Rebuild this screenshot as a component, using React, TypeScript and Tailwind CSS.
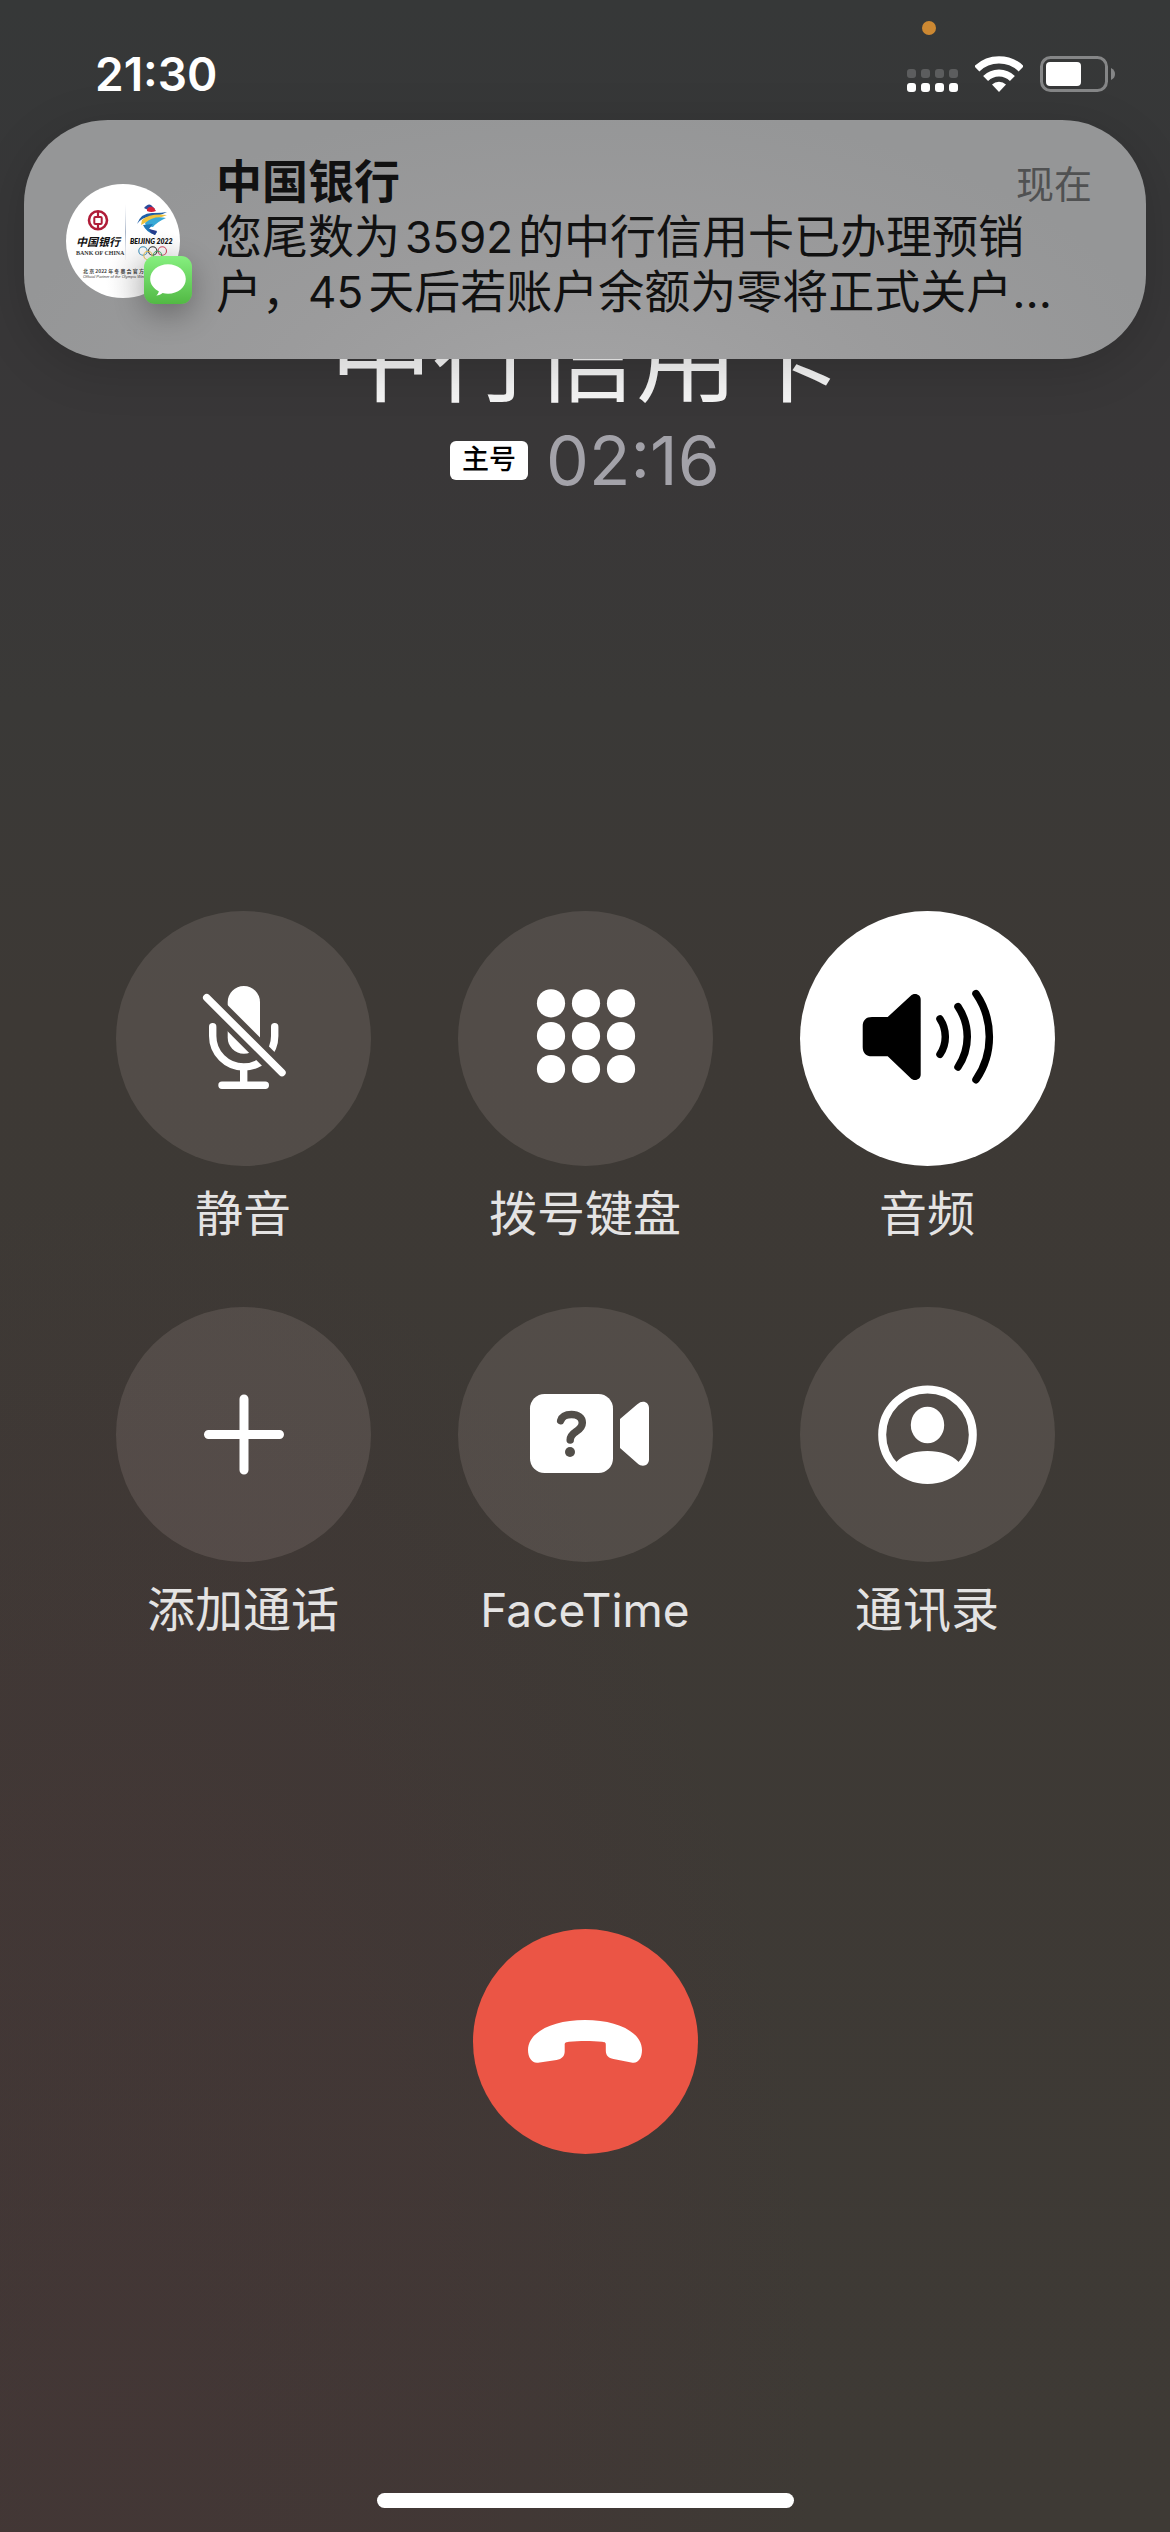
import type { ReactNode } from "react";

function WifiIcon() {
  return (
    <svg className="h-9 w-12" viewBox="0 0 48 36" fill="none" aria-hidden="true">
      <path d="M1.8 12.8A32 32 0 0 1 46.2 12.8" stroke="#fff" strokeWidth="7.4" />
      <path d="M10.6 22.6A19 19 0 0 1 37.4 22.6" stroke="#fff" strokeWidth="7" />
      <path d="M24 36L17 28.6A10 10 0 0 1 31 28.6Z" fill="#fff" />
    </svg>
  );
}

function BatteryIcon() {
  return (
    <svg className="h-9 w-[76px]" viewBox="0 0 76 36" fill="none" aria-hidden="true">
      <rect x="1.5" y="1.5" width="65" height="33" rx="9" stroke="#858687" strokeWidth="3" />
      <rect x="6" y="6" width="35" height="24" rx="4" fill="#fff" />
      <path d="M71 12C74 13.5 75 15.5 75 18C75 20.5 74 22.5 71 24Z" fill="#858687" />
    </svg>
  );
}

function SignalDots() {
  return (
    <div className="grid grid-cols-4 gap-[5px]" aria-hidden="true">
      {[0, 1, 2, 3].map((i) => (
        <span key={i} className="size-[9px] rounded-[3px] bg-[#5c5d5e]" />
      ))}
      {[0, 1, 2, 3].map((i) => (
        <span key={i} className="size-[9px] rounded-[3px] bg-white" />
      ))}
    </div>
  );
}

function StatusBar() {
  return (
    <div className="flex h-[120px] items-start justify-between pt-[46px] pr-[54px] pl-[95px]">
      <time className="text-[46px] leading-[56px] font-semibold text-white">21:30</time>
      <div className="relative flex items-center pt-[10px]">
        <span className="absolute -top-[25px] left-[15px] size-3.5 rounded-full bg-[#cc8832]" />
        <div className="mt-3 mr-[17px]">
          <SignalDots />
        </div>
        <WifiIcon />
        <div className="ml-[17px]">
          <BatteryIcon />
        </div>
      </div>
    </div>
  );
}

function SenderAvatar() {
  return (
    <div className="relative mt-2 h-[114px] w-[126px] shrink-0">
      <svg className="size-[114px] rounded-full" viewBox="0 0 114 114" aria-hidden="true">
        <defs>
          <radialGradient id="paper" cx="0.8" cy="0.85" r="0.45">
            <stop offset="0" stopColor="#e4e4e4" />
            <stop offset="1" stopColor="#ffffff" />
          </radialGradient>
          <linearGradient id="rule" x1="0" y1="0" x2="0" y2="1">
            <stop offset="0" stopColor="#ccd3e0" stopOpacity="0" />
            <stop offset="0.5" stopColor="#aab6c8" />
            <stop offset="1" stopColor="#ccd3e0" stopOpacity="0.2" />
          </linearGradient>
        </defs>
        <rect width="114" height="114" fill="url(#paper)" />
        <circle cx="32" cy="36.3" r="9" fill="none" stroke="#b01c38" strokeWidth="2.6" />
        <rect x="28.3" y="33" width="7.4" height="7" rx="1" fill="none" stroke="#b01c38" strokeWidth="2" />
        <path d="M32 27V33M32 40V46" stroke="#b01c38" strokeWidth="2.2" />
        <text x="10" y="62" fontSize="11" fontWeight="700" fontStyle="italic" fill="#111" fontFamily="'Noto Sans CJK SC', sans-serif">
          中国银行
        </text>
        <text x="10" y="71" fontSize="6" fontWeight="700" fill="#333" fontFamily="'Liberation Serif', serif">
          BANK OF CHINA
        </text>
        <rect x="59" y="20" width="1" height="56" fill="url(#rule)" />
        <path d="M78 24Q82 19 85 21L89 25L84 27Z" fill="#2c4a9a" />
        <path d="M81 25Q84 21 88 24L90 27Q85 29 81 27Z" fill="#d4213a" />
        <path d="M71 40Q75 28 88 29Q96 29 101 28Q91 33 84 33Q76 33 71 40Z" fill="#1f5fa8" />
        <path d="M76 36Q84 29 101 31Q90 35 84 37Q80 38 75 41Z" fill="#f0c23c" />
        <path d="M79 39Q88 31 100 34Q91 38 87 43L80 42Z" fill="#38a9d6" />
        <path d="M77 41L87 40L83 45L91 48L89 51Q80 48 77 41Z" fill="#2178b8" />
        <path d="M83 45L91 47L89 51L85 49Z" fill="#263c8c" />
        <text x="64" y="60" fontSize="7" fontWeight="800" fontStyle="italic" fill="#111" fontFamily="Lato, sans-serif">
          BEIJING 2022
        </text>
        <g fill="none" strokeWidth="1.1">
          <circle cx="77" cy="67" r="4.2" stroke="#3f8fb8" />
          <circle cx="86.7" cy="67" r="4.2" stroke="#333" />
          <circle cx="96.3" cy="67" r="4.2" stroke="#cf4a60" />
          <circle cx="82" cy="71.5" r="4.2" stroke="#e8bf55" />
          <circle cx="91.5" cy="71.5" r="4.2" stroke="#4ba567" />
        </g>
        <text x="17" y="89" fontSize="5" fontWeight="700" fill="#444" fontFamily="'Noto Sans CJK SC', sans-serif">
          北 京 2022 年 冬 奥 会 官 方
        </text>
        <text x="17" y="94" fontSize="4" fontStyle="italic" fill="#444" fontFamily="'Liberation Sans', sans-serif">
          Official Partner of the Olympic Winter Games
        </text>
      </svg>
      <span className="absolute top-[72px] left-[78px] size-12 overflow-hidden rounded-[11px] bg-linear-to-b from-[#86f07f] to-[#52b944] shadow-[0_10px_30px_rgba(0,0,0,0.3)]">
        <svg viewBox="0 0 48 48" aria-hidden="true">
          <path
            d="M24 8.3C34 8.3 41.8 14.8 41.8 23S34 37.7 24 37.7C22 37.7 20.300 37.5 18.600 37C16.800 38.600 14.800 39.500 12.300 39.500C13.800 38.200 14.600 36.700 14.800 35.200C9.600 32.600 6.200 28.200 6.200 23C6.200 14.800 14 8.300 24 8.300Z"
            fill="#fff"
          />
        </svg>
      </span>
    </div>
  );
}

function Notification() {
  return (
    <section
      aria-label="中国银行"
      className="absolute inset-x-6 top-[120px] z-10 flex items-center rounded-[84px] bg-[#959697] bg-[radial-gradient(ellipse_at_50%_120%,#a4a4a5_0%,#9b9b9c_40%,#959697_75%)] pt-[34px] pr-[54px] pb-10 pl-[42px] shadow-[0_10px_50px_rgba(0,0,0,0.16)]"
    >
      <SenderAvatar />
      <div className="ml-6 min-w-0 flex-1">
        <div className="flex items-baseline justify-between">
          <h2 className="text-[46px] leading-[54px] font-bold text-[#111]">中国银行</h2>
          <time className="text-[38px] leading-[50px] text-[#505152]">现在</time>
        </div>
        <p className="text-[46px] leading-[54px] text-[#111]">
          您尾数为<span className="mx-[5px] text-[44px]">3592</span>的中行信用卡已办理预销户，
          <span className="mr-[5px] text-[44px]">45</span>天后若账户余额为零将正式关户…
        </p>
      </div>
    </section>
  );
}

function MutedMicIcon() {
  return (
    <svg viewBox="0 0 255 255" fill="none" aria-hidden="true">
      <defs>
        <mask id="mic-cut" maskUnits="userSpaceOnUse" x="0" y="0" width="255" height="255">
          <rect width="255" height="255" fill="#fff" />
          <path d="M80.700 76.300L176 171.600" stroke="#000" strokeWidth="18.500" />
        </mask>
      </defs>
      <g mask="url(#mic-cut)">
        <rect x="111.700" y="75" width="32.300" height="67.700" rx="16.100" fill="currentColor" />
        <path d="M96.700 115.700V125A31 31 0 0 0 158.700 125V115.700" stroke="currentColor" strokeWidth="7.400" strokeLinecap="round" />
      </g>
      <path d="M127.700 157V173" stroke="currentColor" strokeWidth="7.400" />
      <path d="M106 174.300H149.300M90.700 86.700L166 161.700" stroke="currentColor" strokeWidth="7.400" strokeLinecap="round" />
    </svg>
  );
}

function KeypadIcon() {
  return (
    <svg viewBox="0 0 255 255" fill="currentColor" aria-hidden="true">
      {[92.3, 125, 158].map((y) => [93, 128, 163].map((x) => <circle key={`${x}-${y}`} cx={x} cy={y} r="14.1" />))}
    </svg>
  );
}

function SpeakerIcon() {
  return (
    <svg viewBox="0 0 255 255" fill="none" aria-hidden="true">
      <path
        d="M72 106H87.700L110.500 85C112 83.600 113.300 83 115 83C118.300 83 120.700 85.300 120.700 88.500V163.500C120.700 166.700 118.300 169 115 169C113.300 169 112 168.400 110.500 167L87.700 145.300H72C66 145.300 62.700 142 62.700 136V115.300C62.700 109.300 66 106 72 106Z"
        fill="currentColor"
      />
      <path
        d="M140 108A32 32 0 0 1 140 143.300M158 95.700A53.700 53.700 0 0 1 158 156M176 82.700A76 76 0 0 1 176 168.700"
        stroke="currentColor"
        strokeWidth="7.500"
        strokeLinecap="round"
      />
    </svg>
  );
}

function PlusIcon() {
  return (
    <svg viewBox="0 0 255 255" fill="none" aria-hidden="true">
      <path d="M128 92V163M92.500 127.500H163.500" stroke="currentColor" strokeWidth="9" strokeLinecap="round" />
    </svg>
  );
}

function FaceTimeIcon() {
  return (
    <svg viewBox="0 0 255 255" fill="none" aria-hidden="true">
      <rect x="72" y="87" width="83" height="79" rx="14.500" fill="currentColor" />
      <path
        d="M162 112L179.300 97.300C181.500 95.400 183 94.700 185 94.700C188.500 94.700 191 97.300 191 101V152.500C191 156.200 188.500 158.700 185 158.700C183 158.700 181.500 158 179.300 156.200L162 141Z"
        fill="currentColor"
      />
      <path
        d="M102.700 113.600C104 109.500 107.500 107.500 113.500 107.500C120 107.500 124.300 110.700 124.300 115.800C124.300 120.200 121.800 122.300 118 124.700C113.800 127.500 112.200 129.300 112.200 133"
        stroke="#524e49"
        strokeWidth="7.500"
        strokeLinecap="round"
      />
      <circle cx="112" cy="145" r="5" fill="#524e49" />
    </svg>
  );
}

function ContactsIcon() {
  return (
    <svg viewBox="0 0 255 255" fill="none" aria-hidden="true">
      <circle cx="127.500" cy="127.700" r="45.300" stroke="currentColor" strokeWidth="8" />
      <ellipse cx="127.500" cy="118" rx="16.700" ry="18.300" fill="currentColor" />
      <path d="M96.300 155C104 147.500 114 144 127.500 144S151 147.500 158.700 155L162 158A46 46 0 0 1 93 158Z" fill="currentColor" />
    </svg>
  );
}

function HangUpIcon() {
  return (
    <svg viewBox="0 0 225 225" fill="#fff" aria-hidden="true">
      <path d="M112 91C80 91 55 103 55 121C55 128.500 59 134.500 65 133.700L83.500 131C89 130 91.700 127 91.700 122.500V116C91.700 113.500 92.500 113.200 96 112.700C106 111.700 119 111.700 129 112.700C132.500 113.200 132.800 113.500 132.800 116V121.500C132.800 126.500 135.500 129.200 140.500 130L159.500 133.700C165.500 134.500 169 128.500 169 121C169 103 144 91 112 91Z" />
    </svg>
  );
}

type Control = { label: string; icon: ReactNode; active?: boolean; latin?: boolean };

const controls: Control[] = [
  { label: "静音", icon: <MutedMicIcon /> },
  { label: "拨号键盘", icon: <KeypadIcon /> },
  { label: "音频", icon: <SpeakerIcon />, active: true },
  { label: "添加通话", icon: <PlusIcon /> },
  { label: "FaceTime", icon: <FaceTimeIcon />, latin: true },
  { label: "通讯录", icon: <ContactsIcon /> },
];

function CallControl({ label, icon, active, latin }: Control) {
  return (
    <button type="button" aria-pressed={active} className="flex flex-col items-center gap-[18px]">
      <span
        className={
          active
            ? "block size-[255px] rounded-full bg-white text-black"
            : "block size-[255px] rounded-full bg-[#fff0e6]/11 text-white"
        }
      >
        {icon}
      </span>
      <span
        className={
          latin ? "text-[46px] leading-[60px] text-[#e4e3e3]" : "text-[48px] leading-[60px] text-[#e4e3e3]"
        }
      >
        {label}
      </span>
    </button>
  );
}

export default function App() {
  return (
    <main
      lang="zh-CN"
      className="relative flex min-h-screen flex-col bg-[#3c3936] bg-[radial-gradient(ellipse_60%_48%_at_10%_95%,rgba(74,50,54,0.4)_0%,rgba(74,50,54,0.3)_50%,transparent_100%),linear-gradient(180deg,#363838_0%,#373738_8%,#393738_18%,#3a3937_28%,#3d3935_40%,#3e3a35_100%)] font-[Inter,'Noto_Sans_CJK_SC',sans-serif]"
    >
      <StatusBar />
      <Notification />

      <header className="mt-[175px] flex flex-col items-center">
        <h1 className="text-[102px] leading-[124px] text-[#f5f5f5]">中行信用卡</h1>
        <div className="mt-px flex items-center gap-[18px]">
          <span className="flex h-[39px] items-center rounded-md bg-white px-3 text-[27px] font-medium text-black">主号</span>
          <time className="text-[68px] leading-[80px] text-[#a3a2a9]">02:16</time>
        </div>
      </header>

      <div className="mt-[411px] grid grid-cols-[repeat(3,255px)] justify-center gap-x-[87px] gap-y-[63px]">
        {controls.map((control) => (
          <CallControl key={control.label} {...control} />
        ))}
      </div>

      <button type="button" aria-label="挂断" className="mx-auto mt-[289px] size-[225px] rounded-full bg-[#eb5545]">
        <HangUpIcon />
      </button>

      <div className="mx-auto mt-auto mb-6 h-[15px] w-[417px] rounded-full bg-white" />
    </main>
  );
}
